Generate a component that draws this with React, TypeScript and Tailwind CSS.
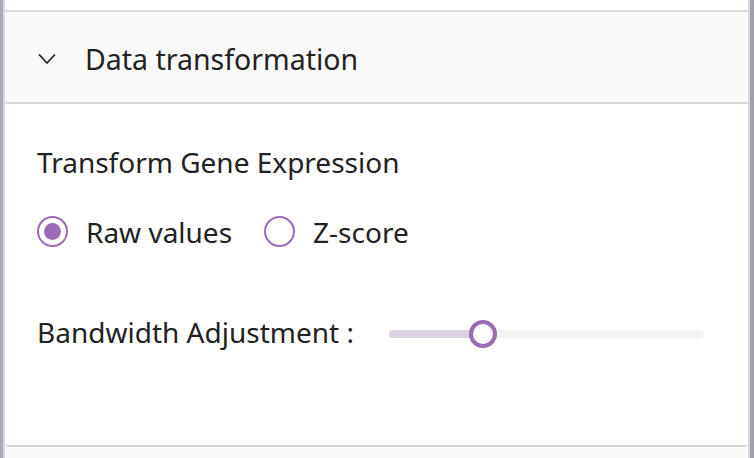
import { useState } from 'react';

export default function App() {
  const [mode, setMode] = useState<'raw' | 'z'>('raw');
  const [bandwidth, setBandwidth] = useState(30);

  return (
    <div
      className="flex h-[458px] w-[754px] overflow-hidden bg-white text-[#222]"
      style={{ fontFamily: '"Noto Sans", "DejaVu Sans", sans-serif' }}
    >
      <div className="w-[3px] bg-[#a9a9b7]" />
      <div className="flex flex-1 flex-col border-x-2 border-[#d9d9d9]">
        <div className="h-[10px] bg-white" />

        {/* accordion header */}
        <div className="flex h-[94px] items-center gap-[29px] border-y-2 border-[#dcdcdc] bg-[#fafafa] pl-[33px] pt-[4px]">
          <svg width="18" height="12" viewBox="0 0 18 12" fill="none">
            <path d="M1 1.5 L9 10 L17 1.5" stroke="#222" strokeWidth="1.7" />
          </svg>
          <span className="text-[28.5px] leading-none">Data transformation</span>
        </div>

        {/* accordion body */}
        <div className="flex h-[343px] flex-col rounded-b-[4px] border-b-2 border-[#d6d6d6] bg-white px-[32px] pt-[44px]">
          <div className="text-[28px] leading-none">Transform Gene Expression</div>

          <div className="mt-[40px] flex items-center gap-[32px]">
            <label className="flex cursor-pointer items-center gap-[18px]" onClick={() => setMode('raw')}>
              <span className="flex h-[31px] w-[31px] items-center justify-center rounded-full border-2 border-[#9a6cb6]">
                {mode === 'raw' && <span className="h-[17px] w-[17px] rounded-full bg-[#9a6cb6]" />}
              </span>
              <span className="text-[28px] leading-none">Raw values</span>
            </label>
            <label className="flex cursor-pointer items-center gap-[18px]" onClick={() => setMode('z')}>
              <span className="flex h-[31px] w-[31px] items-center justify-center rounded-full border-2 border-[#9a6cb6]">
                {mode === 'z' && <span className="h-[17px] w-[17px] rounded-full bg-[#9a6cb6]" />}
              </span>
              <span className="text-[28px] leading-none">Z-score</span>
            </label>
          </div>

          <div className="mt-[71px] flex items-center">
            <span className="text-[28px] leading-none">Bandwidth Adjustment :</span>
            <div className="relative ml-[35px] h-[28px] w-[315px] translate-y-[2px]">
              <div className="absolute left-0 right-0 top-[10px] h-[8px] rounded-full bg-[#f4f4f4]" />
              <div
                className="absolute left-0 top-[10px] h-[8px] rounded-full bg-[#dad1e0]"
                style={{ width: `${bandwidth}%` }}
              />
              <div
                className="absolute top-0 h-[28px] w-[28px] -translate-x-1/2 rounded-full border-[4px] border-[#9a6cb6] bg-white"
                style={{ left: `${bandwidth}%` }}
                onClick={() => setBandwidth(bandwidth)}
              />
            </div>
          </div>
        </div>

        <div className="flex-1 bg-[#fafafa]" />
      </div>
      <div className="w-[4px] bg-[#9e9eac]" />
    </div>
  );
}
